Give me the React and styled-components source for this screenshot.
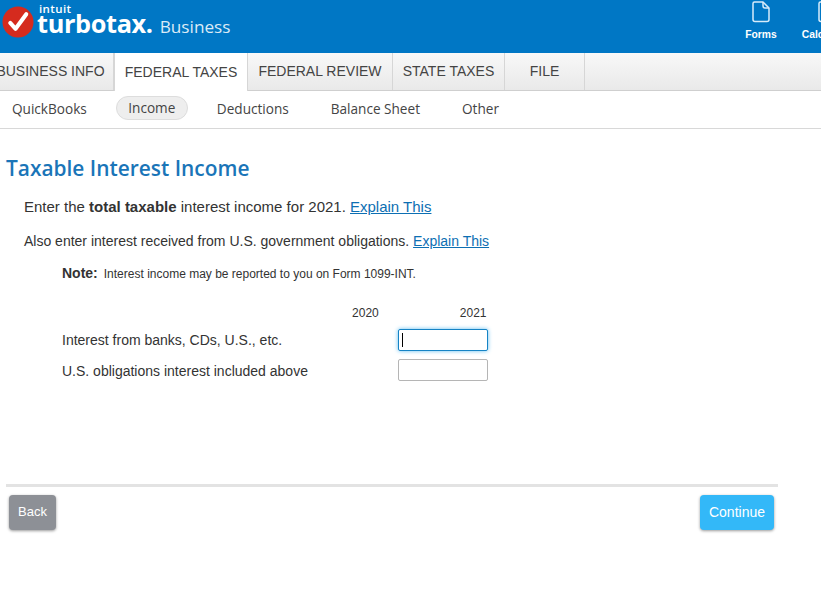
import React from 'react';
import styled, { createGlobalStyle } from 'styled-components';

const GlobalStyle = createGlobalStyle`
  html, body {
    margin: 0;
    padding: 0;
    background: #fff;
    overflow: hidden;
  }
  body {
    font-family: "Liberation Sans", Arial, sans-serif;
    color: #333;
  }
`;

const Page = styled.div`
  width: 821px;
  height: 603px;
  overflow: hidden;
`;

const Header = styled.header`
  height: 53px;
  background: #0077c5;
  display: flex;
  justify-content: space-between;
  overflow: hidden;
`;

const Brand = styled.div`
  display: flex;
  align-items: flex-start;
  padding: 4px 0 0 2px;
  color: #fff;
  svg {
    margin-top: 2px;
  }
`;

const BrandText = styled.div`
  display: flex;
  flex-direction: column;
  margin-left: 3px;
`;

const Intuit = styled.span`
  font-family: "Open Sans", sans-serif;
  font-size: 11.5px;
  font-weight: 600;
  line-height: 9px;
  letter-spacing: 0.4px;
  margin-left: 2px;
`;

const Wordmark = styled.div`
  display: flex;
  align-items: baseline;
`;

const Turbotax = styled.span`
  font-family: "Open Sans", sans-serif;
  font-size: 25.3px;
  font-weight: 700;
  line-height: 21px;
  letter-spacing: -0.35px;
`;

const Business = styled.span`
  font-family: "Open Sans", sans-serif;
  font-size: 17.2px;
  line-height: 21px;
  margin-left: 7px;
  color: #dcebf7;
`;

const Tools = styled.div`
  display: flex;
  gap: 34px;
  margin-right: -22px;
  padding-top: 1px;
`;

const Tool = styled.div`
  width: 32px;
  display: flex;
  flex-direction: column;
  align-items: center;
  color: #fff;
  font-size: 10.3px;
  font-weight: 700;
  line-height: 12px;
  gap: 6px;
  white-space: nowrap;
  svg {
    display: block;
  }
`;

const Tabs = styled.nav`
  height: 38px;
  display: flex;
  margin-left: -12px;
  background: linear-gradient(#f8f8f8, #e9e9e9);
  border-bottom: 1px solid #cfcfcf;
  box-sizing: border-box;
`;

const Tab = styled.div`
  width: ${({ $width }) => $width}px;
  box-sizing: border-box;
  display: flex;
  justify-content: center;
  align-items: center;
  font-size: 14px;
  color: #444;
  white-space: nowrap;
  border-right: 1px solid #d6d6d6;
  padding-bottom: 2px;
  ${({ $active }) =>
    $active &&
    `
    background: #fff;
    height: 38px;
    padding-bottom: 0;
    border-left: 1px solid #d6d6d6;
  `}
`;

const SubNav = styled.nav`
  height: 38px;
  box-sizing: border-box;
  border-bottom: 1px solid #d8d8d8;
  display: flex;
  align-items: center;
  padding: 0 0 3px 12px;
  font-family: "Open Sans", sans-serif;
  font-size: 13.6px;
  color: #444;
`;

const SubItem = styled.span`
  margin-right: ${({ $gap }) => $gap}px;
  ${({ $active }) =>
    $active &&
    `
    background: #eee;
    border: 1px solid #ddd;
    border-radius: 12px;
    padding: 2px 11.5px;
    line-height: 18px;
  `}
`;

const Main = styled.main`
  padding: 24px 0 0 6px;
`;

const Title = styled.h1`
  margin: 0;
  font-family: "Open Sans", sans-serif;
  font-size: 20.9px;
  font-weight: 600;
  line-height: 30px;
  color: #1a75b8;
`;

const Lead = styled.p`
  margin: 14px 0 0 18px;
  font-size: 15px;
  line-height: 20px;
  color: #333;
`;

const Sub = styled.p`
  margin: 14px 0 0 18px;
  font-size: 14px;
  line-height: 20px;
`;

const Explain = styled.a`
  color: #0d6fb3;
  text-decoration: underline;
`;

const Note = styled.div`
  margin: 13px 0 0 56px;
  display: flex;
  align-items: baseline;
  gap: 6px;
  font-size: 12px;
  line-height: 18px;
  b {
    font-size: 14px;
  }
`;

const Form = styled.div`
  margin: 23px 0 0 56px;
  width: 426px;
  display: grid;
  grid-template-columns: 1fr 90px;
`;

const Years = styled.div`
  grid-column: 1 / 3;
  display: flex;
  justify-content: flex-end;
  gap: 81px;
  font-size: 12px;
  line-height: 14px;
  padding-right: 1.5px;
  margin-bottom: 9px;
`;

const Label = styled.label`
  font-size: 14px;
  line-height: 22px;
  margin-bottom: 9px;
`;

const Input = styled.div`
  width: 90px;
  height: 22px;
  box-sizing: border-box;
  border: 1px solid ${({ $focus }) => ($focus ? '#1583c5' : '#b5b5b5')};
  border-radius: 2px;
  background: #fff;
  margin: ${({ $focus }) => ($focus ? '0 0 9px' : '-1px 0 10px')};
  padding: 3px 0 0 3px;
  ${({ $focus }) => $focus && 'box-shadow: 0 0 4px #62bdf0;'}
`;

const Caret = styled.div`
  width: 1px;
  height: 14px;
  background: #000;
`;

const Footer = styled.div`
  margin-top: 93px;
  width: 765px;
  border-top: 3px solid #e3e3e3;
  padding: 8px 4px 0 3px;
  display: flex;
  justify-content: space-between;
`;

const Button = styled.div`
  height: 35px;
  box-sizing: border-box;
  padding-bottom: 2px;
  display: flex;
  align-items: center;
  justify-content: center;
  width: ${({ $width }) => $width}px;
  border-radius: 4px;
  background: ${({ $bg }) => $bg};
  color: #fff;
  font-size: ${({ $size }) => $size}px;
  box-shadow: 0 1px 3px rgba(0, 0, 0, 0.4);
`;

const Check = () => (
  <svg width="32" height="32" viewBox="0 0 33 33">
    <circle cx="16.5" cy="16.5" r="16" fill="#d52b1e" />
    <path d="M8.5 17.5 L14 23.5 L25 8.5" fill="none" stroke="#fff" strokeWidth="4.2" strokeLinecap="round" strokeLinejoin="round" />
  </svg>
);

const DocIcon = () => (
  <svg width="18" height="22" viewBox="0 0 18 22" fill="none" stroke="#d8ecfa" strokeWidth="1.5" strokeLinejoin="round">
    <path d="M2.5 1 H11 L17 7 V18.5 A2 2 0 0 1 15 20.5 H3 A2 2 0 0 1 1 18.5 V2.5 A1.5 1.5 0 0 1 2.5 1 Z" />
    <path d="M11 1 V5 A2 2 0 0 0 13 7 H17" />
  </svg>
);

const tabs = [
  { label: 'BUSINESS INFO', width: 126 },
  { label: 'FEDERAL TAXES', width: 134, active: true },
  { label: 'FEDERAL REVIEW', width: 145 },
  { label: 'STATE TAXES', width: 112 },
  { label: 'FILE', width: 80 },
];

const subItems = [
  { label: 'QuickBooks', gap: 29 },
  { label: 'Income', gap: 29, active: true },
  { label: 'Deductions', gap: 42 },
  { label: 'Balance Sheet', gap: 42 },
  { label: 'Other', gap: 0 },
];

export default function App() {
  return (
    <Page>
      <GlobalStyle />
      <Header>
        <Brand>
          <Check />
          <BrandText>
            <Intuit>intuit</Intuit>
            <Wordmark>
              <Turbotax>turbotax.</Turbotax>
              <Business>Business</Business>
            </Wordmark>
          </BrandText>
        </Brand>
        <Tools>
          <Tool>
            <DocIcon />
            Forms
          </Tool>
          <Tool>
            <DocIcon />
            Calculator
          </Tool>
        </Tools>
      </Header>
      <Tabs>
        {tabs.map((t) => (
          <Tab key={t.label} $width={t.width} $active={t.active}>
            {t.label}
          </Tab>
        ))}
      </Tabs>
      <SubNav>
        {subItems.map((s) => (
          <SubItem key={s.label} $gap={s.gap} $active={s.active}>
            {s.label}
          </SubItem>
        ))}
      </SubNav>
      <Main>
        <Title>Taxable Interest Income</Title>
        <Lead>
          Enter the <b>total taxable</b> interest income for 2021. <Explain>Explain This</Explain>
        </Lead>
        <Sub>
          Also enter interest received from U.S. government obligations. <Explain>Explain This</Explain>
        </Sub>
        <Note>
          <b>Note:</b> Interest income may be reported to you on Form 1099-INT.
        </Note>
        <Form>
          <Years>
            <span>2020</span>
            <span>2021</span>
          </Years>
          <Label>Interest from banks, CDs, U.S., etc.</Label>
          <Input $focus>
            <Caret />
          </Input>
          <Label>U.S. obligations interest included above</Label>
          <Input />
        </Form>
        <Footer>
          <Button $width={47} $bg="#8d9096" $size={13}>Back</Button>
          <Button $width={74} $bg="#33b8f8" $size={14}>Continue</Button>
        </Footer>
      </Main>
    </Page>
  );
}
